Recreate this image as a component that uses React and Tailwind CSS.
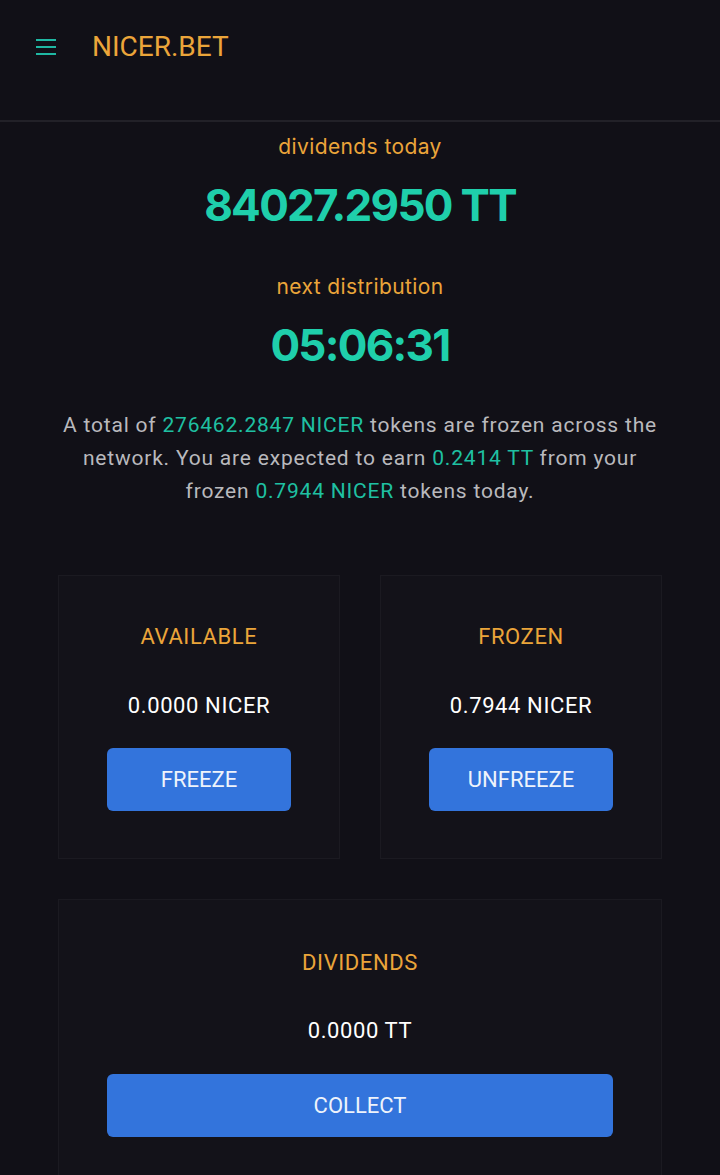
export default function App() {
  const rob = { fontFamily: "Roboto, 'Liberation Sans', sans-serif" };
  const head = { fontFamily: "Inter, 'Noto Sans', sans-serif" };
  return (
    <div className="min-h-[1175px] bg-[#111017] text-white" style={rob}>
      <header className="flex h-[122px] items-center border-b-2 border-[#222128] pl-[36px] pb-[26px]">
        <div className="flex w-[20px] flex-col gap-[5px]">
          <span className="block h-[2px] w-[20px] bg-[#1fb8a3]" />
          <span className="block h-[2px] w-[20px] bg-[#1fb8a3]" />
          <span className="block h-[2px] w-[20px] bg-[#1fb8a3]" />
        </div>
        <div className="ml-[36px] text-[28px] leading-none text-[#eba53a]">NICER.BET</div>
      </header>

      <section className="flex flex-col items-center">
        <div className="mt-[11px] text-[21px] leading-[28px] tracking-[0.4px] text-[#eba53a]" style={head}>dividends today</div>
        <div className="mt-[16px] text-[44px] font-bold leading-[56px] tracking-[-1.7px] text-[#1fcfab]" style={head}>84027.2950 TT</div>
        <div className="mt-[40px] text-[21px] leading-[28px] tracking-[0.4px] text-[#eba53a]" style={head}>next distribution</div>
        <div className="mt-[16px] text-[44px] font-bold leading-[56px] tracking-[-1.7px] text-[#1fcfab]" style={head}>05:06:31</div>
        <p className="mt-[36px] w-[604px] text-center text-[21px] leading-[33px] tracking-[0.8px] text-[#b9b9bd]">
          A total of <span className="text-[#1fc0a2]">276462.2847 NICER</span> tokens are frozen across the network. You are expected to earn{" "}
          <span className="text-[#1fc0a2]">0.2414 TT</span> from your frozen{" "}
          <span className="text-[#1fc0a2]">0.7944 NICER</span> tokens today.
        </p>
      </section>

      <div className="mx-[58px] mt-[67px] grid grid-cols-2 gap-[40px]">
        <Card label="AVAILABLE" value="0.0000 NICER" action="FREEZE" />
        <Card label="FROZEN" value="0.7944 NICER" action="UNFREEZE" />
      </div>

      <div className="mx-[58px] mt-[40px] flex h-[290px] flex-col items-center border border-[#1b1a21] bg-[#131219] px-[48px] pt-[49px]">
        <div className="text-[22px] leading-[28px] tracking-[0.6px] text-[#eba53a]">DIVIDENDS</div>
        <div className="mt-[40px] text-[22px] leading-[28px] tracking-[0.6px] text-white">0.0000 TT</div>
        <button className="mt-[29px] flex h-[63px] w-full items-center justify-center rounded-[6px] bg-[#3374dc] text-[22px] text-[#eef3fb]">COLLECT</button>
      </div>
    </div>
  );
}

function Card({ label, value, action }) {
  return (
    <div className="flex h-[284px] flex-col items-center border border-[#1b1a21] bg-[#131219] pt-[47px]">
      <div className="text-[22px] leading-[28px] tracking-[0.6px] text-[#eba53a]">{label}</div>
      <div className="mt-[41px] text-[22px] leading-[28px] tracking-[0.6px] text-white">{value}</div>
      <button className="mt-[28px] flex h-[63px] w-[184px] items-center justify-center rounded-[6px] bg-[#3374dc] text-[22px] text-[#eef3fb]">{action}</button>
    </div>
  );
}
